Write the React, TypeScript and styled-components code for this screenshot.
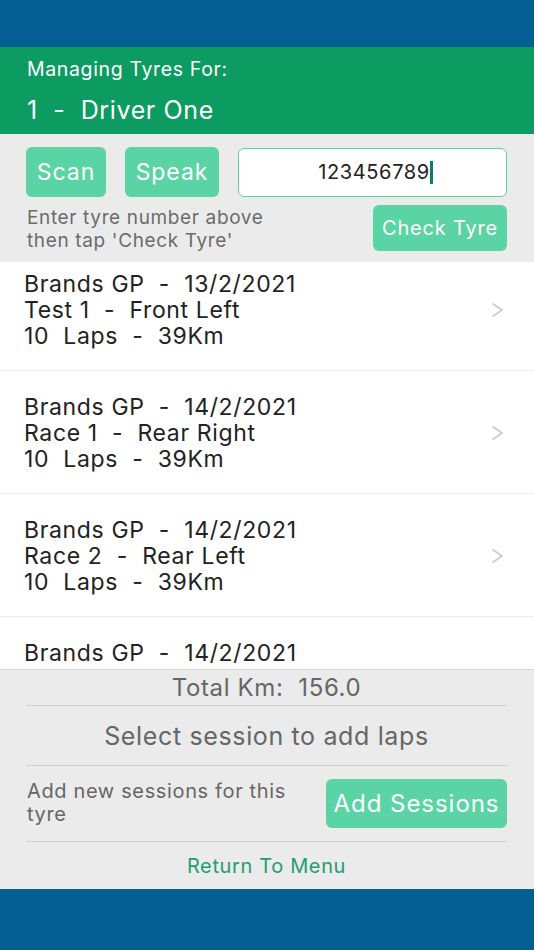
import styled, { createGlobalStyle } from 'styled-components'

const GlobalStyle = createGlobalStyle`
  html, body {
    margin: 0;
    padding: 0;
    background: #ebebeb;
  }
  body {
    font-family: Inter, Roboto, 'Noto Sans', sans-serif;
    letter-spacing: 0.04em;
  }
`

const Screen = styled.div`
  width: 534px;
  height: 950px;
  display: flex;
  flex-direction: column;
  background: #ebebeb;
  overflow: hidden;
  & > * {
    flex-shrink: 0;
  }
`
const StatusBar = styled.div`
  height: 47px;
  background: #055e94;
`
const NavBar = styled.div`
  height: 61px;
  background: #055e94;
`
const Header = styled.div`
  height: 87px;
  background: #0c9b60;
  color: #ffffff;
  padding: 10px 27px 0;
  box-sizing: border-box;
`
const HeaderLabel = styled.div`
  font-size: 19.5px;
  line-height: 24px;
`
const DriverName = styled.div`
  font-size: 25px;
  line-height: 30px;
  margin-top: 14px;
`
const SearchPanel = styled.div`
  padding: 13px 27px 0 26px;
  height: 128px;
  box-sizing: border-box;
`
const TopRow = styled.div`
  display: flex;
  align-items: center;
  gap: 19px;
`
const GreenButton = styled.button<{ $width?: number; $height?: number; $size?: number }>`
  width: ${(p) => p.$width ?? 80}px;
  height: ${(p) => p.$height ?? 50}px;
  flex-shrink: 0;
  border: none;
  border-radius: 6px;
  background: #5ad4a4;
  color: #ffffff;
  font-family: Inter, Roboto, sans-serif;
  letter-spacing: 0.04em;
  font-size: ${(p) => p.$size ?? 22}px;
  padding: 0;
  white-space: nowrap;
`
const TyreInput = styled.div`
  flex: 1;
  height: 49px;
  background: #ffffff;
  border: 1px solid #5ad4a4;
  border-radius: 6px;
  box-sizing: border-box;
  display: flex;
  align-items: center;
  justify-content: center;
  font-size: 20px;
  color: #222222;
  padding-left: 6px;
`
const Cursor = styled.span`
  display: inline-block;
  width: 3px;
  height: 23px;
  background: #0e7c6c;
`
const HintRow = styled.div`
  display: flex;
  justify-content: space-between;
  align-items: flex-start;
  margin-top: 8px;
`
const Hint = styled.div`
  font-size: 19px;
  line-height: 23px;
  color: #6b6b6b;
  padding-left: 1px;
  margin-top: 1px;
`
const SessionList = styled.div`
  height: 408px;
  box-sizing: border-box;
  background: #ffffff;
  overflow: hidden;
  border-bottom: 1px solid #d6d6d6;
`
const ListInner = styled.div<{ $offset: number }>`
  margin-top: ${(p) => -p.$offset}px;
`
const SessionRow = styled.div`
  height: 123px;
  box-sizing: border-box;
  padding: 23px 30px 0 24px;
  display: flex;
  align-items: flex-start;
  border-bottom: 1px solid #ededed;
`
const SessionText = styled.div`
  flex: 1;
  font-size: 23px;
  line-height: 26px;
  color: #222222;
  white-space: pre;
`
const Chevron = styled.svg`
  margin-top: 31px;
  flex-shrink: 0;
`
const Footer = styled.div`
  padding: 0 27px 0 26px;
  display: flex;
  flex-direction: column;
  & > * {
    box-sizing: border-box;
    flex-shrink: 0;
  }
`
const TotalLine = styled.div`
  height: 36px;
  display: flex;
  align-items: center;
  justify-content: center;
  font-size: 24px;
  color: #666666;
  border-bottom: 1px solid #cfcfcf;
  white-space: pre;
`
const SelectLine = styled.div`
  height: 60px;
  display: flex;
  align-items: center;
  justify-content: center;
  font-size: 25px;
  color: #666666;
  border-bottom: 1px solid #cfcfcf;
`
const AddRow = styled.div`
  height: 76px;
  display: flex;
  align-items: center;
  justify-content: space-between;
  border-bottom: 1px solid #cfcfcf;
`
const AddText = styled.div`
  width: 275px;
  font-size: 20px;
  line-height: 23px;
  color: #666666;
  padding-left: 1px;
  margin-top: -1px;
`
const ReturnLink = styled.div`
  height: 47px;
  display: flex;
  align-items: center;
  justify-content: center;
  font-size: 20px;
  color: #1f9e6e;
`

const sessions = [
  ['Brands GP  -  13/2/2021', 'Test 1  -  Front Left', '10  Laps  -  39Km'],
  ['Brands GP  -  14/2/2021', 'Race 1  -  Rear Right', '10  Laps  -  39Km'],
  ['Brands GP  -  14/2/2021', 'Race 2  -  Rear Left', '10  Laps  -  39Km'],
  ['Brands GP  -  14/2/2021'],
]

export default function App() {
  return (
    <Screen>
      <GlobalStyle />
      <StatusBar />
      <Header>
        <HeaderLabel>Managing Tyres For:</HeaderLabel>
        <DriverName>1&nbsp;&nbsp;-&nbsp;&nbsp;Driver One</DriverName>
      </Header>
      <SearchPanel>
        <TopRow>
          <GreenButton $width={80} $size={23}>Scan</GreenButton>
          <GreenButton $width={94} $size={23}>Speak</GreenButton>
          <TyreInput>
            123456789
            <Cursor />
          </TyreInput>
        </TopRow>
        <HintRow>
          <Hint>
            Enter tyre number above
            <br />
            then tap 'Check Tyre'
          </Hint>
          <GreenButton $width={134} $height={46} $size={20}>
            Check Tyre
          </GreenButton>
        </HintRow>
      </SearchPanel>
      <SessionList>
        <ListInner $offset={14}>
          {sessions.map((s, i) => (
            <SessionRow key={i}>
              <SessionText>{s.join('\n')}</SessionText>
              {s.length > 1 && (
                <Chevron width="13" height="16" viewBox="0 0 13 16">
                  <path d="M1.5 1.5 L11 8 L1.5 14.5" fill="none" stroke="#c9c9c9" strokeWidth="1.6" />
                </Chevron>
              )}
            </SessionRow>
          ))}
        </ListInner>
      </SessionList>
      <Footer>
        <TotalLine>Total Km:  156.0</TotalLine>
        <SelectLine>Select session to add laps</SelectLine>
        <AddRow>
          <AddText>Add new sessions for this tyre</AddText>
          <GreenButton $width={181} $height={49} $size={24}>
            Add Sessions
          </GreenButton>
        </AddRow>
        <ReturnLink>Return To Menu</ReturnLink>
      </Footer>
      <NavBar />
    </Screen>
  )
}
